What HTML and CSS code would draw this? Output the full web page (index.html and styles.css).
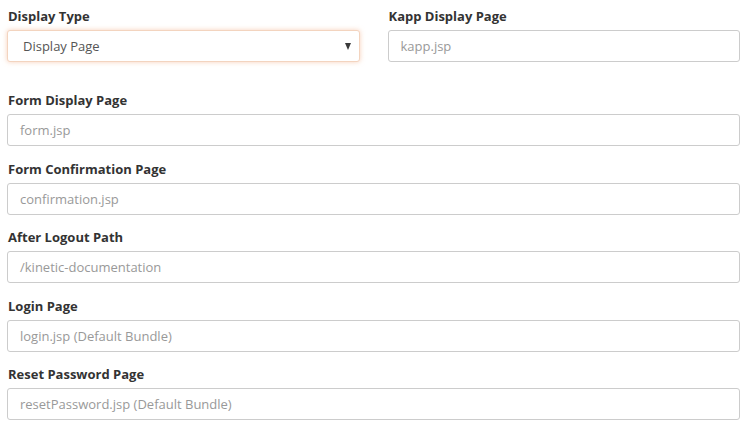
FILE: index.html
```html
<!DOCTYPE html>
<html>
<head>
<meta charset="utf-8">
<link rel="stylesheet" href="styles.css">
</head>
<body>
<form class="form">
  <div class="row">
    <div class="group">
      <label class="label">Display Type</label>
      <div class="select">
        <span class="select-text">Display Page</span>
        <span class="caret"></span>
      </div>
    </div>
    <div class="group">
      <label class="label">Kapp Display Page</label>
      <div class="input">kapp.jsp</div>
    </div>
  </div>
  <div class="group">
    <label class="label">Form Display Page</label>
    <div class="input">form.jsp</div>
  </div>
  <div class="group">
    <label class="label">Form Confirmation Page</label>
    <div class="input">confirmation.jsp</div>
  </div>
  <div class="group">
    <label class="label">After Logout Path</label>
    <div class="input">/kinetic-documentation</div>
  </div>
  <div class="group">
    <label class="label">Login Page</label>
    <div class="input">login.jsp (Default Bundle)</div>
  </div>
  <div class="group">
    <label class="label">Reset Password Page</label>
    <div class="input">resetPassword.jsp (Default Bundle)</div>
  </div>
</form>
</body>
</html>
```

FILE: styles.css
```css
html, body {
  margin: 0;
  padding: 0;
  background: #ffffff;
}
body {
  font-family: "Open Sans", "Noto Sans", sans-serif;
  font-size: 13px;
  color: #333333;
}
.form {
  padding: 7px 9px 0 7px;
}
.row {
  display: grid;
  grid-template-columns: 1fr 1fr;
  column-gap: 28px;
  margin-bottom: 15.5px;
}
.group {
  margin-bottom: 13.5px;
}
.label {
  display: block;
  font-weight: 700;
  line-height: 18px;
  margin: 0 0 5px 1px;
  color: #333333;
}
.input, .select {
  box-sizing: border-box;
  height: 32px;
  border: 1px solid #cccccc;
  border-radius: 3px;
  padding: 0 12px;
  line-height: 30px;
  color: #999999;
  background: #ffffff;
}
.select {
  display: flex;
  align-items: center;
  justify-content: space-between;
  padding: 0 8px 0 15px;
  color: #555555;
  border-color: #f3d4bf;
  box-shadow: 0 0 5px rgba(240, 170, 130, 0.55);
}
.caret {
  width: 0;
  height: 0;
  border-left: 3.5px solid transparent;
  border-right: 3.5px solid transparent;
  border-top: 7px solid #3a3a3a;
}
```
